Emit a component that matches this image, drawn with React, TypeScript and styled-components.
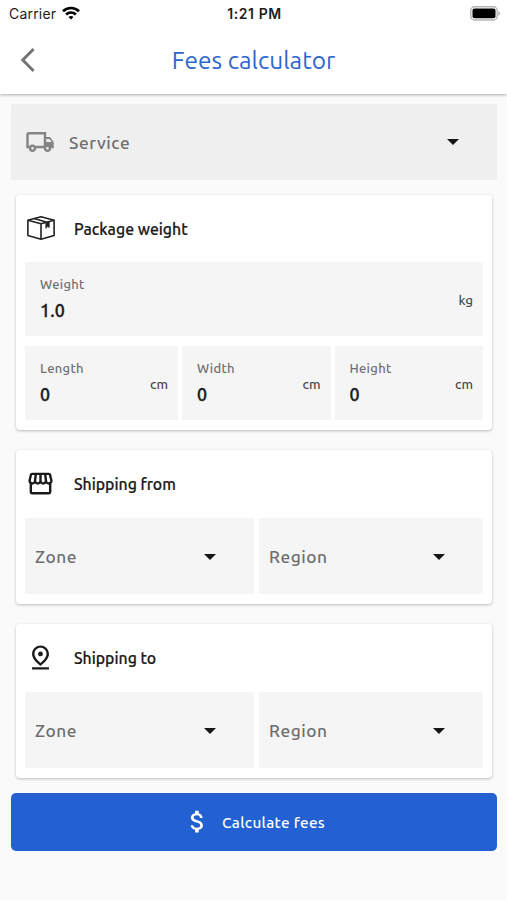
import React from "react";
import styled, { createGlobalStyle } from "styled-components";
import {
  MdAttachMoney,
  MdOutlineLocalShipping,
  MdOutlinePinDrop,
  MdOutlineStorefront,
} from "react-icons/md";

const GlobalStyle = createGlobalStyle`
  *, *::before, *::after { box-sizing: border-box; }
  body {
    margin: 0;
    background: #fafafa;
    font-family: "Ubuntu", "Noto Sans", sans-serif;
  }
  button { font: inherit; border: 0; padding: 0; text-align: left; }
`;

const Screen = styled.div`
  display: flex;
  flex-direction: column;
  width: 100%;
  min-height: 900px;
  background: #fafafa;
`;

const Header = styled.header`
  height: 94px;
  background: #fff;
  box-shadow: 0 1px 3px rgba(0, 0, 0, 0.3);
`;

const StatusBar = styled.div`
  display: grid;
  grid-template-columns: 1fr auto 1fr;
  align-items: center;
  height: 28px;
  padding: 0 7px 0 9px;
  font-family: Inter, sans-serif;
  font-size: 14px;
  line-height: 28px;
  color: #1c1c1c;
`;

const Carrier = styled.div`
  display: flex;
  align-items: center;
  gap: 6px;
  letter-spacing: 0.2px;
  svg { margin-top: -3px; }
`;

const Clock = styled.div`
  font-weight: 600;
  letter-spacing: 0.6px;
`;

const BatterySlot = styled.div`
  display: flex;
  justify-content: flex-end;
  svg { margin: -2px -1px 0 0; }
`;

const TitleBar = styled.div`
  display: grid;
  grid-template-columns: 60px 1fr 60px;
  align-items: center;
  height: 64px;
`;

const BackButton = styled.button`
  display: flex;
  padding-left: 20px;
  background: none;
`;

const Title = styled.h1`
  margin: 0;
  text-align: center;
  font-size: 24.4px;
  line-height: 32px;
  font-weight: 400;
  color: #2c67cf;
`;

const Form = styled.main`
  display: flex;
  flex-direction: column;
  padding: 10px 10px 0 11px;
`;

const ServiceSelect = styled.button`
  display: flex;
  align-items: center;
  height: 76px;
  padding: 0 38px 0 14px;
  border-radius: 3px 3px 0 0;
  background: #efefef;
  color: #858585;
`;

const SelectLabel = styled.span<{ $indent?: number; $drop?: number }>`
  flex: 1;
  margin-left: ${(p) => p.$indent ?? 0}px;
  padding-top: ${(p) => p.$drop ?? 0}px;
  font-size: 17.3px;
  line-height: 24px;
  font-weight: 500;
  letter-spacing: 0.55px;
  color: #6e6e6e;
`;

const Card = styled.section<{ $top: number }>`
  margin: ${(p) => p.$top}px 5px 0;
  padding: 0 9px 10px;
  border-radius: 4px;
  background: #fff;
  box-shadow: 0 1px 3px rgba(0, 0, 0, 0.26);
`;

const CardHeader = styled.div<{ $height: number }>`
  display: flex;
  align-items: center;
  height: ${(p) => p.$height}px;
  color: #1b1b1b;
`;

const IconSlot = styled.div`
  display: flex;
  justify-content: center;
  width: 31px;
  padding-bottom: 1px;
`;

const CardTitle = styled.h2`
  margin: 0 0 0 18px;
  font-size: 15.8px;
  line-height: 22px;
  font-weight: 500;
  color: #1b1b1b;
  -webkit-text-stroke: 0.2px currentColor;
`;

const FieldRow = styled.div<{ $columns: string; $gap?: number; $top?: number }>`
  display: grid;
  grid-template-columns: ${(p) => p.$columns};
  column-gap: ${(p) => p.$gap ?? 5}px;
  margin-top: ${(p) => p.$top ?? 0}px;
`;

const Field = styled.label`
  display: flex;
  align-items: center;
  justify-content: space-between;
  height: 74px;
  padding: 2px 10px 0 15px;
  background: #f5f5f5;
`;

const FieldText = styled.div`
  display: flex;
  flex-direction: column;
`;

const FieldName = styled.span`
  font-size: 13px;
  line-height: 20px;
  font-weight: 500;
  letter-spacing: 0.3px;
  color: #707070;
`;

const FieldValue = styled.span`
  font-size: 17.8px;
  line-height: 33px;
  font-weight: 500;
  letter-spacing: 0.2px;
  color: #1c1c1c;
  -webkit-text-stroke: 0.35px currentColor;
`;

const Unit = styled.span`
  padding-top: 2px;
  font-size: 13.4px;
  line-height: 20px;
  font-weight: 500;
  color: #4c4c4c;
`;

const Select = styled.button`
  display: flex;
  align-items: center;
  height: 76px;
  padding: 2px 38px 0 10px;
  background: #f5f5f5;
  svg { margin-top: -1px; }
`;

const SubmitButton = styled.button`
  display: flex;
  align-items: center;
  justify-content: center;
  gap: 10px;
  height: 58px;
  margin-top: 15px;
  border-radius: 5px;
  background: #2361d2;
  color: #fff;
  font-size: 15.3px;
  font-weight: 500;
  letter-spacing: 0.3px;
  svg { margin-top: -1px; }
`;

const WifiIcon = () => (
  <svg width="18" height="14" viewBox="0 0 18 14" fill="none" stroke="#000" strokeWidth="2.6">
    <path d="M1 5.2C5.4.9 12.6.9 17 5.2" />
    <path d="M4.1 8.5c2.8-2.6 7-2.6 9.8 0" />
    <path d="M6.5 10.9c1.5-1.3 3.5-1.3 5 0L9 13.5z" fill="#000" stroke="none" />
  </svg>
);

const BatteryIcon = () => (
  <svg width="31" height="15" viewBox="0 0 31 15">
    <rect x="0.8" y="0.8" width="26.4" height="13.2" rx="3.8" fill="#fff" stroke="#b5b5b5" strokeWidth="1.4" />
    <rect x="2.5" y="2.5" width="23" height="9.8" rx="2" fill="#000" />
    <path d="M28.4 5.2c2.3.7 2.3 3.7 0 4.4z" fill="#b5b5b5" />
  </svg>
);

const BackIcon = () => (
  <svg width="16" height="26" viewBox="0 0 16 26" fill="none" stroke="#757575" strokeWidth="3">
    <path d="M13.6 2 2.8 13l10.8 11" />
  </svg>
);

const CaretIcon = () => (
  <svg width="12" height="6" viewBox="0 0 12 6" fill="#161616">
    <path d="M0 0h12L6 6z" />
  </svg>
);

const PackageIcon = () => (
  <svg width="28" height="24" viewBox="0 0 28 24" fill="none" stroke="#222" strokeWidth="1.6" strokeLinejoin="round">
    <path d="M.9 4.3 14 .8l13.1 3.5v15.2L14 23.2.9 19.5z" />
    <path d="M.9 4.3 14 7.8l13.1-3.5M14 7.8v15.4M7.2 2.6l12.6 3.6" />
    <path d="m18.8 6.5 3.5-.9v6l-1.8-1.1-1.7 2z" fill="#222" strokeWidth="0.6" />
  </svg>
);

interface MeasureProps {
  name: string;
  value: string;
  unit: string;
}

const Measure = ({ name, value, unit }: MeasureProps) => (
  <Field>
    <FieldText>
      <FieldName>{name}</FieldName>
      <FieldValue>{value}</FieldValue>
    </FieldText>
    <Unit>{unit}</Unit>
  </Field>
);

interface PlaceCardProps {
  title: string;
  top: number;
  icon: React.ReactNode;
}

const PlaceCard = ({ title, top, icon }: PlaceCardProps) => (
  <Card $top={top}>
    <CardHeader $height={68}>
      <IconSlot>{icon}</IconSlot>
      <CardTitle>{title}</CardTitle>
    </CardHeader>
    <FieldRow $columns="229px 1fr">
      {["Zone", "Region"].map((label) => (
        <Select key={label} type="button">
          <SelectLabel>{label}</SelectLabel>
          <CaretIcon />
        </Select>
      ))}
    </FieldRow>
  </Card>
);

export default function App() {
  return (
    <Screen>
      <GlobalStyle />
      <Header>
        <StatusBar>
          <Carrier>
            Carrier
            <WifiIcon />
          </Carrier>
          <Clock>1:21 PM</Clock>
          <BatterySlot>
            <BatteryIcon />
          </BatterySlot>
        </StatusBar>
        <TitleBar>
          <BackButton type="button" aria-label="Back">
            <BackIcon />
          </BackButton>
          <Title>Fees calculator</Title>
        </TitleBar>
      </Header>
      <Form>
        <ServiceSelect type="button">
          <MdOutlineLocalShipping size={30} />
          <SelectLabel $indent={14} $drop={2}>Service</SelectLabel>
          <CaretIcon />
        </ServiceSelect>
        <Card $top={15}>
          <CardHeader $height={67}>
            <IconSlot>
              <PackageIcon />
            </IconSlot>
            <CardTitle>Package weight</CardTitle>
          </CardHeader>
          <FieldRow $columns="1fr">
            <Measure name="Weight" value="1.0" unit="kg" />
          </FieldRow>
          <FieldRow $columns="153px 1fr 1fr" $gap={4} $top={10}>
            <Measure name="Length" value="0" unit="cm" />
            <Measure name="Width" value="0" unit="cm" />
            <Measure name="Height" value="0" unit="cm" />
          </FieldRow>
        </Card>
        <PlaceCard title="Shipping from" top={20} icon={<MdOutlineStorefront size={29} />} />
        <PlaceCard title="Shipping to" top={20} icon={<MdOutlinePinDrop size={29} />} />
        <SubmitButton type="button">
          <MdAttachMoney size={29} />
          Calculate fees
        </SubmitButton>
      </Form>
    </Screen>
  );
}
